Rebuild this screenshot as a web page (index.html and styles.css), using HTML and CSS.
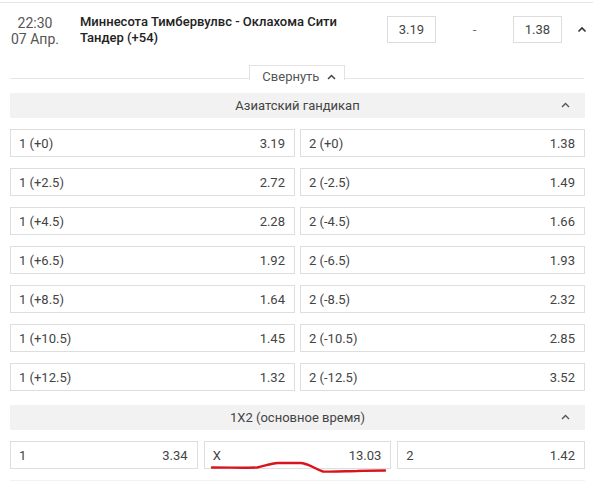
FILE: index.html
```html
<!DOCTYPE html>
<html lang="ru">
<head>
<meta charset="utf-8">
<link rel="stylesheet" href="styles.css">
</head>
<body>
<div class="page">
  <div class="match">
    <div class="time"><div>22:30</div><div>07 Апр.</div></div>
    <div class="teams">Миннесота Тимбервулвс - Оклахома Сити Тандер (+54)</div>
    <div class="top-odds">
      <div class="odd-box">3.19</div>
      <div class="dash">-</div>
      <div class="odd-box">1.38</div>
    </div>
    <svg class="chev top-chev" width="10" height="7" viewBox="0 0 10 7"><path d="M1.5 5.5 L5 2 L8.5 5.5" fill="none" stroke="#333" stroke-width="1.6"/></svg>
  </div>
  <div class="collapse-line">
    <div class="collapse-tab">Свернуть <svg class="chev" width="9" height="6" viewBox="0 0 9 6"><path d="M1 5 L4.5 1.5 L8 5" fill="none" stroke="#444" stroke-width="1.5"/></svg></div>
  </div>

  <div class="section-head">Азиатский гандикап<svg class="head-chev" width="9" height="6" viewBox="0 0 9 6"><path d="M1 5 L4.5 1.5 L8 5" fill="none" stroke="#555" stroke-width="1.4"/></svg></div>
  <div class="grid two">
    <div class="cell"><span>1 (+0)</span><span class="val">3.19</span></div>
    <div class="cell"><span>2 (+0)</span><span class="val">1.38</span></div>
    <div class="cell"><span>1 (+2.5)</span><span class="val">2.72</span></div>
    <div class="cell"><span>2 (-2.5)</span><span class="val">1.49</span></div>
    <div class="cell"><span>1 (+4.5)</span><span class="val">2.28</span></div>
    <div class="cell"><span>2 (-4.5)</span><span class="val">1.66</span></div>
    <div class="cell"><span>1 (+6.5)</span><span class="val">1.92</span></div>
    <div class="cell"><span>2 (-6.5)</span><span class="val">1.93</span></div>
    <div class="cell"><span>1 (+8.5)</span><span class="val">1.64</span></div>
    <div class="cell"><span>2 (-8.5)</span><span class="val">2.32</span></div>
    <div class="cell"><span>1 (+10.5)</span><span class="val">1.45</span></div>
    <div class="cell"><span>2 (-10.5)</span><span class="val">2.85</span></div>
    <div class="cell"><span>1 (+12.5)</span><span class="val">1.32</span></div>
    <div class="cell"><span>2 (-12.5)</span><span class="val">3.52</span></div>
  </div>

  <div class="section-head">1X2 (основное время)<svg class="head-chev" width="9" height="6" viewBox="0 0 9 6"><path d="M1 5 L4.5 1.5 L8 5" fill="none" stroke="#555" stroke-width="1.4"/></svg></div>
  <div class="grid three">
    <div class="cell"><span>1</span><span class="val">3.34</span></div>
    <div class="cell"><span>X</span><span class="val">13.03</span></div>
    <div class="cell"><span>2</span><span class="val">1.42</span></div>
  </div>
  <div class="section-head next"></div>

  <svg class="scribble" width="593" height="481" viewBox="0 0 593 481"><path d="M212 467.5 C230 467.5 248 468 257 467.5 C265 466 270 463.5 278 463 L301 463 C310 464 315 469 323 471.5 C335 472 348 471 357 471 C368 470.5 378 470.5 385 470.5" fill="none" stroke="#d8141c" stroke-width="2.4" stroke-linecap="round"/></svg>
</div>
</body>
</html>
```

FILE: styles.css
```css
* { box-sizing: border-box; }
html, body { margin: 0; padding: 0; background: #fff; }
body {
  font-family: Roboto, "Noto Sans", Arial, sans-serif;
  font-size: 13px;
  color: #333;
  overflow: hidden;
}
.page {
  position: relative;
  width: 593px;
  height: 481px;
  padding: 2px 8px 0 10px;
}
.match {
  display: flex;
  align-items: center;
  height: 58px;
  border-top: 1px solid #e6e6e6;
  margin: 0 -8px 0 -10px;
  padding-bottom: 4px;
}
.time {
  width: 70px;
  text-align: center;
  color: #555;
  font-size: 14px;
  line-height: 16px;
  padding-top: 2px;
}
.teams {
  margin-left: 10px;
  width: 290px;
  font-weight: 500;
  color: #222;
  line-height: 16px;
  font-size: 13px;
}
.top-odds {
  display: flex;
  align-items: center;
  margin-left: 17px;
}
.odd-box {
  width: 49px;
  height: 27px;
  border: 1px solid #dcdcdc;
  display: flex;
  align-items: center;
  justify-content: center;
  color: #444;
  font-size: 13px;
}
.dash {
  width: 77px;
  text-align: center;
  color: #666;
}
.top-chev { margin-left: 15px; }
.collapse-line {
  position: relative;
  height: 15px;
  border-bottom: 1px solid #e6e6e6;
  margin-top: 4px;
  margin-right: 1px;
}
.collapse-tab {
  position: absolute;
  left: 239px;
  top: 1px;
  width: 96px;
  height: 15px;
  background: #fff;
  border: 1px solid #e2e2e2;
  border-bottom: none;
  text-align: center;
  color: #555;
  font-size: 13px;
  line-height: 20px;
  padding-top: 1px;
  padding-left: 4px;
}
.collapse-tab .chev { margin-left: 4px; vertical-align: 1px; }
.section-head {
  position: relative;
  margin-top: 14px;
  height: 25px;
  background: #f2f2f2;
  text-align: center;
  line-height: 25px;
  color: #444;
  font-size: 13px;
}
.head-chev {
  position: absolute;
  right: 15px;
  top: 9px;
}
.grid {
  display: grid;
  gap: 11px 5px;
  margin-top: 11px;
}
.grid.two { grid-template-columns: 1fr 1fr; }
.grid.three { grid-template-columns: 1fr 1fr 1fr; gap: 6px; }
.cell {
  height: 28px;
  border: 1px solid #dedede;
  display: flex;
  align-items: center;
  justify-content: space-between;
  padding: 0 9px 0 8px;
  color: #444;
  font-size: 13px;
}
.val { color: #444; }
.section-head.next { margin-top: 11px; height: 10px; }
.scribble {
  position: absolute;
  left: 0;
  top: 0;
  pointer-events: none;
}
```
